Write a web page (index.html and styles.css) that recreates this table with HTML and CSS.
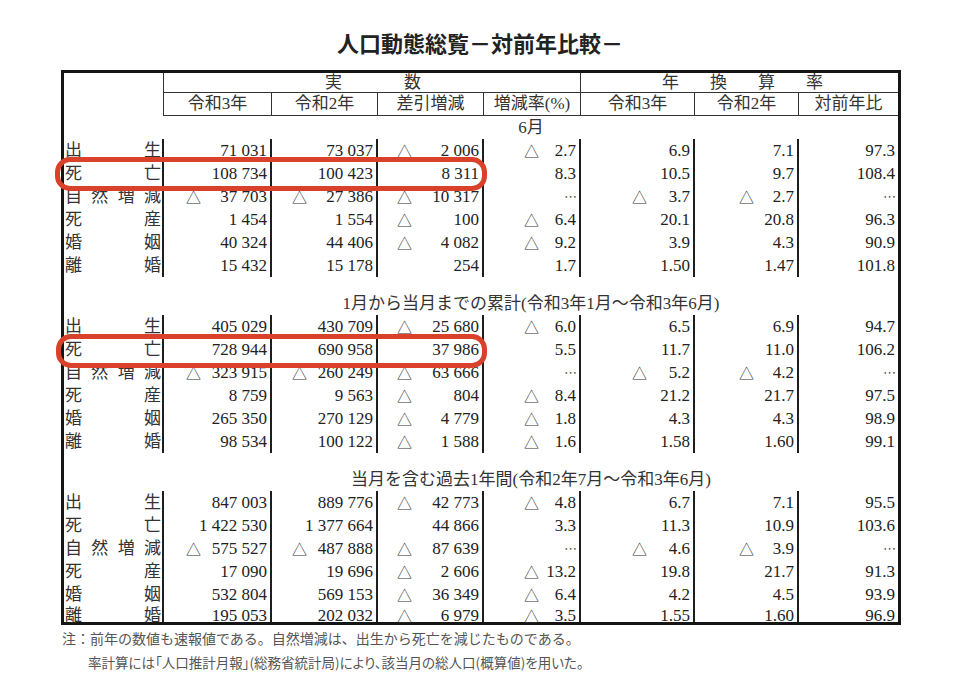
FILE: index.html
```html
<!DOCTYPE html>
<html lang="ja">
<head>
<meta charset="utf-8">
<title>人口動態総覧－対前年比較－</title>
<link rel="stylesheet" href="styles.css">
</head>
<body>
<div class="page">
  <h1 class="title">人口動態総覧－対前年比較－</h1>

  <div class="tbl">
    <div class="h-label"></div>
    <div class="h-group g1"><span>実</span><span>数</span></div>
    <div class="h-group g2"><span>年</span><span>換</span><span>算</span><span>率</span></div>
    <div class="row head">
      <div class="h-col">令和3年</div>
      <div class="h-col">令和2年</div>
      <div class="h-col">差引増減</div>
      <div class="h-col">増減率(%)</div>
      <div class="h-col">令和3年</div>
      <div class="h-col">令和2年</div>
      <div class="h-col">対前年比</div>
    </div>

    <!-- Section 1 -->
    <div class="sec">6月</div>
    <div class="row"><div class="l"><span>出</span><span>生</span></div><div class="c"><span class="n">71 031</span></div><div class="c"><span class="n">73 037</span></div><div class="c"><span class="tri">△</span><span class="n">2 006</span></div><div class="c"><span class="tri">△</span><span class="n">2.7</span></div><div class="c"><span class="n">6.9</span></div><div class="c"><span class="n">7.1</span></div><div class="c"><span class="n">97.3</span></div></div>
    <div class="row"><div class="l"><span>死</span><span>亡</span></div><div class="c"><span class="n">108 734</span></div><div class="c"><span class="n">100 423</span></div><div class="c"><span class="n">8 311</span></div><div class="c"><span class="n">8.3</span></div><div class="c"><span class="n">10.5</span></div><div class="c"><span class="n">9.7</span></div><div class="c"><span class="n">108.4</span></div></div>
    <div class="row"><div class="l"><span>自</span><span>然</span><span>増</span><span>減</span></div><div class="c"><span class="tri">△</span><span class="n">37 703</span></div><div class="c"><span class="tri">△</span><span class="n">27 386</span></div><div class="c"><span class="tri">△</span><span class="n">10 317</span></div><div class="c"><span class="n dots">⋯</span></div><div class="c"><span class="tri">△</span><span class="n">3.7</span></div><div class="c"><span class="tri">△</span><span class="n">2.7</span></div><div class="c"><span class="n dots">⋯</span></div></div>
    <div class="row"><div class="l"><span>死</span><span>産</span></div><div class="c"><span class="n">1 454</span></div><div class="c"><span class="n">1 554</span></div><div class="c"><span class="tri">△</span><span class="n">100</span></div><div class="c"><span class="tri">△</span><span class="n">6.4</span></div><div class="c"><span class="n">20.1</span></div><div class="c"><span class="n">20.8</span></div><div class="c"><span class="n">96.3</span></div></div>
    <div class="row"><div class="l"><span>婚</span><span>姻</span></div><div class="c"><span class="n">40 324</span></div><div class="c"><span class="n">44 406</span></div><div class="c"><span class="tri">△</span><span class="n">4 082</span></div><div class="c"><span class="tri">△</span><span class="n">9.2</span></div><div class="c"><span class="n">3.9</span></div><div class="c"><span class="n">4.3</span></div><div class="c"><span class="n">90.9</span></div></div>
    <div class="row"><div class="l"><span>離</span><span>婚</span></div><div class="c"><span class="n">15 432</span></div><div class="c"><span class="n">15 178</span></div><div class="c"><span class="n">254</span></div><div class="c"><span class="n">1.7</span></div><div class="c"><span class="n">1.50</span></div><div class="c"><span class="n">1.47</span></div><div class="c"><span class="n">101.8</span></div></div>

    <div class="gap"></div>

    <!-- Section 2 -->
    <div class="sec">1月から当月までの累計(令和3年1月～令和3年6月)</div>
    <div class="row"><div class="l"><span>出</span><span>生</span></div><div class="c"><span class="n">405 029</span></div><div class="c"><span class="n">430 709</span></div><div class="c"><span class="tri">△</span><span class="n">25 680</span></div><div class="c"><span class="tri">△</span><span class="n">6.0</span></div><div class="c"><span class="n">6.5</span></div><div class="c"><span class="n">6.9</span></div><div class="c"><span class="n">94.7</span></div></div>
    <div class="row"><div class="l"><span>死</span><span>亡</span></div><div class="c"><span class="n">728 944</span></div><div class="c"><span class="n">690 958</span></div><div class="c"><span class="n">37 986</span></div><div class="c"><span class="n">5.5</span></div><div class="c"><span class="n">11.7</span></div><div class="c"><span class="n">11.0</span></div><div class="c"><span class="n">106.2</span></div></div>
    <div class="row"><div class="l"><span>自</span><span>然</span><span>増</span><span>減</span></div><div class="c"><span class="tri">△</span><span class="n">323 915</span></div><div class="c"><span class="tri">△</span><span class="n">260 249</span></div><div class="c"><span class="tri">△</span><span class="n">63 666</span></div><div class="c"><span class="n dots">⋯</span></div><div class="c"><span class="tri">△</span><span class="n">5.2</span></div><div class="c"><span class="tri">△</span><span class="n">4.2</span></div><div class="c"><span class="n dots">⋯</span></div></div>
    <div class="row"><div class="l"><span>死</span><span>産</span></div><div class="c"><span class="n">8 759</span></div><div class="c"><span class="n">9 563</span></div><div class="c"><span class="tri">△</span><span class="n">804</span></div><div class="c"><span class="tri">△</span><span class="n">8.4</span></div><div class="c"><span class="n">21.2</span></div><div class="c"><span class="n">21.7</span></div><div class="c"><span class="n">97.5</span></div></div>
    <div class="row"><div class="l"><span>婚</span><span>姻</span></div><div class="c"><span class="n">265 350</span></div><div class="c"><span class="n">270 129</span></div><div class="c"><span class="tri">△</span><span class="n">4 779</span></div><div class="c"><span class="tri">△</span><span class="n">1.8</span></div><div class="c"><span class="n">4.3</span></div><div class="c"><span class="n">4.3</span></div><div class="c"><span class="n">98.9</span></div></div>
    <div class="row"><div class="l"><span>離</span><span>婚</span></div><div class="c"><span class="n">98 534</span></div><div class="c"><span class="n">100 122</span></div><div class="c"><span class="tri">△</span><span class="n">1 588</span></div><div class="c"><span class="tri">△</span><span class="n">1.6</span></div><div class="c"><span class="n">1.58</span></div><div class="c"><span class="n">1.60</span></div><div class="c"><span class="n">99.1</span></div></div>

    <div class="gap"></div>

    <!-- Section 3 -->
    <div class="sec">当月を含む過去1年間(令和2年7月～令和3年6月)</div>
    <div class="row"><div class="l"><span>出</span><span>生</span></div><div class="c"><span class="n">847 003</span></div><div class="c"><span class="n">889 776</span></div><div class="c"><span class="tri">△</span><span class="n">42 773</span></div><div class="c"><span class="tri">△</span><span class="n">4.8</span></div><div class="c"><span class="n">6.7</span></div><div class="c"><span class="n">7.1</span></div><div class="c"><span class="n">95.5</span></div></div>
    <div class="row"><div class="l"><span>死</span><span>亡</span></div><div class="c"><span class="n">1 422 530</span></div><div class="c"><span class="n">1 377 664</span></div><div class="c"><span class="n">44 866</span></div><div class="c"><span class="n">3.3</span></div><div class="c"><span class="n">11.3</span></div><div class="c"><span class="n">10.9</span></div><div class="c"><span class="n">103.6</span></div></div>
    <div class="row"><div class="l"><span>自</span><span>然</span><span>増</span><span>減</span></div><div class="c"><span class="tri">△</span><span class="n">575 527</span></div><div class="c"><span class="tri">△</span><span class="n">487 888</span></div><div class="c"><span class="tri">△</span><span class="n">87 639</span></div><div class="c"><span class="n dots">⋯</span></div><div class="c"><span class="tri">△</span><span class="n">4.6</span></div><div class="c"><span class="tri">△</span><span class="n">3.9</span></div><div class="c"><span class="n dots">⋯</span></div></div>
    <div class="row"><div class="l"><span>死</span><span>産</span></div><div class="c"><span class="n">17 090</span></div><div class="c"><span class="n">19 696</span></div><div class="c"><span class="tri">△</span><span class="n">2 606</span></div><div class="c"><span class="tri">△</span><span class="n">13.2</span></div><div class="c"><span class="n">19.8</span></div><div class="c"><span class="n">21.7</span></div><div class="c"><span class="n">91.3</span></div></div>
    <div class="row"><div class="l"><span>婚</span><span>姻</span></div><div class="c"><span class="n">532 804</span></div><div class="c"><span class="n">569 153</span></div><div class="c"><span class="tri">△</span><span class="n">36 349</span></div><div class="c"><span class="tri">△</span><span class="n">6.4</span></div><div class="c"><span class="n">4.2</span></div><div class="c"><span class="n">4.5</span></div><div class="c"><span class="n">93.9</span></div></div>
    <div class="row last"><div class="l"><span>離</span><span>婚</span></div><div class="c"><span class="n">195 053</span></div><div class="c"><span class="n">202 032</span></div><div class="c"><span class="tri">△</span><span class="n">6 979</span></div><div class="c"><span class="tri">△</span><span class="n">3.5</span></div><div class="c"><span class="n">1.55</span></div><div class="c"><span class="n">1.60</span></div><div class="c"><span class="n">96.9</span></div></div>
  </div>

  <div class="note">
    <p class="n1">注：前年の数値も速報値である。自然増減は、出生から死亡を減じたものである。</p>
    <p class="n2">率計算には「人口推計月報」(総務省統計局)により、該当月の総人口(概算値)を用いた。</p>
  </div>

  <div class="mark m1"></div>
  <div class="mark m2"></div>
</div>
</body>
</html>
```

FILE: styles.css
```css
* { box-sizing: border-box; }

html, body {
  margin: 0;
  padding: 0;
  background: #ffffff;
}

body {
  font-family: "Liberation Serif", "Noto Sans CJK JP", serif;
  color: #2a2a2a;
}

.page {
  position: relative;
  width: 960px;
  height: 686px;
  overflow: hidden;
}

.title {
  margin: 0;
  padding-top: 27px;
  height: 57px;
  font-family: "Noto Sans CJK JP", sans-serif;
  font-size: 22px;
  font-weight: 700;
  line-height: 30px;
  text-align: center;
  color: #222;
}

.tbl {
  display: grid;
  grid-template-columns: 100px 108px 106px 106px 97px 114px 104px 99px;
  width: 840px;
  margin: 13px 0 0 61px;
  border: 3px solid #151515;
  font-size: 17px;
}

/* header */
.h-label {
  grid-column: 1;
  grid-row: 1 / 3;
  border-right: 1px solid #333;
}

.h-group {
  grid-row: 1;
  height: 20px;
  line-height: 19px;
  border-bottom: 1px solid #333;
  display: flex;
  justify-content: center;
  color: #333;
}

.g1 {
  grid-column: 2 / 6;
  border-right: 1px solid #333;
  gap: 62px;
  padding-left: 2px;
}

.g2 {
  grid-column: 6 / 9;
  gap: 31px;
  padding-left: 6px;
}

.row { display: contents; }

.h-col {
  height: 23px;
  line-height: 22px;
  text-align: center;
  border-bottom: 1px solid #333;
  border-right: 1px solid #333;
  color: #333;
}

.row.head > :last-child { border-right: none; }

/* section titles and gaps */
.sec {
  grid-column: 2 / 9;
  height: 23px;
  line-height: 23px;
  text-align: center;
  color: #333;
}

.gap {
  grid-column: 1 / 9;
  height: 15px;
}

/* data cells */
.l, .c {
  height: 23px;
  line-height: 23px;
  border-right: 2px solid #1e1e1e;
  display: flex;
  align-items: flex-start;
  white-space: nowrap;
}

.row > :last-child { border-right: none; }

.l {
  justify-content: space-between;
  padding: 0 1px 0 1px;
  color: #333;
}

.c {
  padding-right: 3px;
  color: #222;
}

.c .n { margin-left: auto; }

.tri {
  font-family: "Noto Sans CJK JP", sans-serif;
  font-size: 15px;
  color: #333;
}

.dots {
  font-family: "DejaVu Sans", sans-serif;
  font-size: 13px;
  color: #555;
  letter-spacing: -1px;
}

.row > .c:nth-child(2) { padding-left: 22px; }
.row > .c:nth-child(3) { padding-left: 20px; }
.row > .c:nth-child(4) { padding-left: 19px; }
.row > .c:nth-child(5) { padding-left: 40px; }
.row > .c:nth-child(6) { padding-left: 51px; }
.row > .c:nth-child(7) { padding-left: 44px; }

.row.last > .l,
.row.last > .c {
  height: 16px;
  line-height: 19px;
}

/* footnote */
.note {
  margin: 1px 0 0 62px;
  font-family: "Noto Sans CJK JP", sans-serif;
  color: #555;
}

.note p {
  margin: 0;
  line-height: 24px;
}

.n1 { font-size: 14px; }

.n2 {
  font-size: 13.5px;
  padding-left: 26px;
  font-feature-settings: "palt";
}

/* red highlight marks */
.mark {
  position: absolute;
  border: 5px solid #d9412a;
  border-radius: 15px;
}

.m1 { left: 55px; top: 157px; width: 432px; height: 34px; }
.m2 { left: 56px; top: 334px; width: 431px; height: 34px; }
```
